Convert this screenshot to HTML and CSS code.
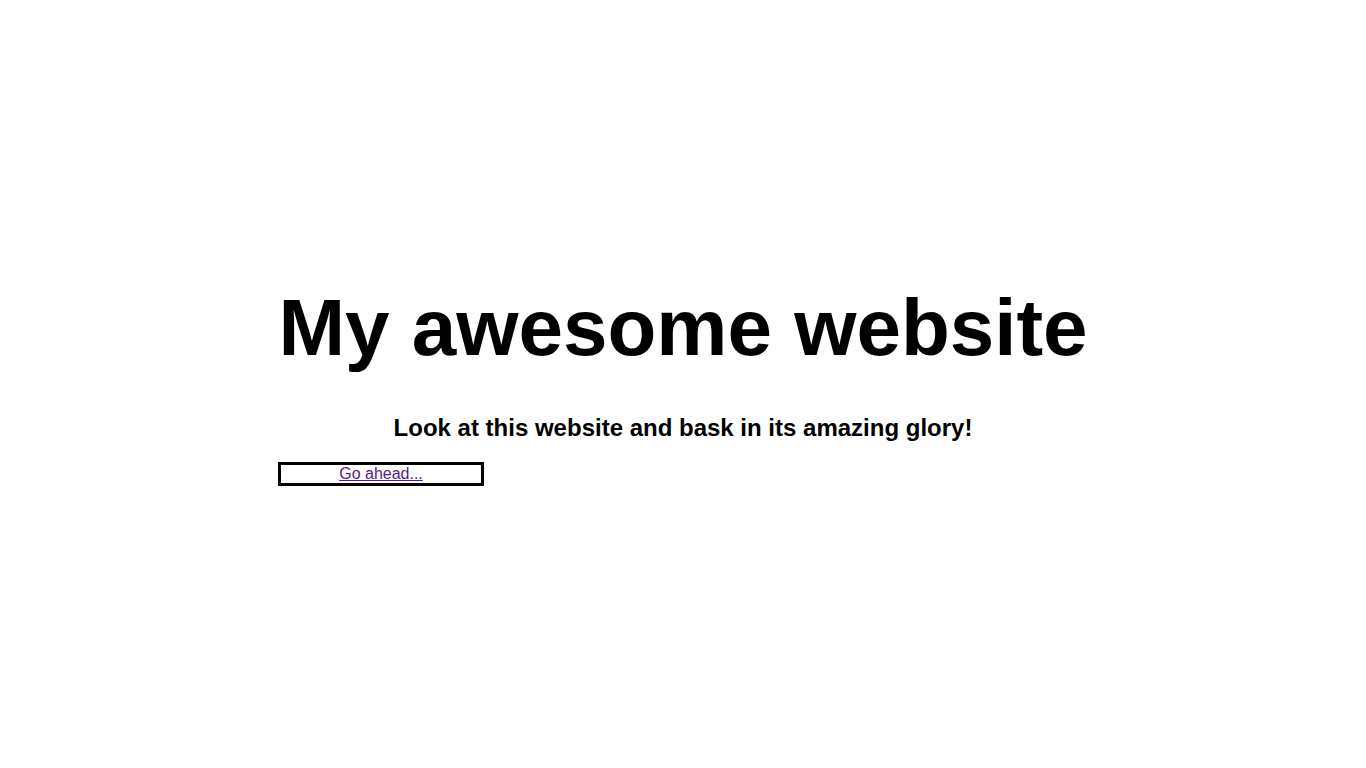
FILE: index.html
```html
<!DOCTYPE html>
<html lang="en">
<head>
<meta charset="utf-8">
<title>My awesome website</title>
<link rel="stylesheet" href="styles.css">
</head>
<body>
<main class="page">
  <div class="content">
    <h1 class="title">My awesome website</h1>
    <h2 class="subtitle">Look at this website and bask in its amazing glory!</h2>
    <div class="cta"><a class="cta-link" href="#">Go ahead...</a></div>
  </div>
</main>
</body>
</html>
```

FILE: styles.css
```css
html, body {
  margin: 0;
  padding: 0;
  background: #ffffff;
}

body {
  font-family: "Liberation Sans", Arial, Helvetica, sans-serif;
  color: #000000;
}

.page {
  min-height: 100vh;
  display: flex;
  align-items: center;
  justify-content: center;
}

.content {
  width: 810px;
}

.title {
  margin: 0 0 40px 0;
  font-size: 80px;
  line-height: 92px;
  font-weight: 700;
  text-align: center;
}

.subtitle {
  margin: 0 0 20px 0;
  font-size: 24px;
  line-height: 28px;
  font-weight: 700;
  text-align: center;
}

.cta {
  width: 200px;
  height: 18px;
  border: 3px solid #000000;
  text-align: center;
  font-size: 16px;
  line-height: 18px;
}

.cta-link {
  color: #551a8b;
  text-decoration: underline;
}
```
